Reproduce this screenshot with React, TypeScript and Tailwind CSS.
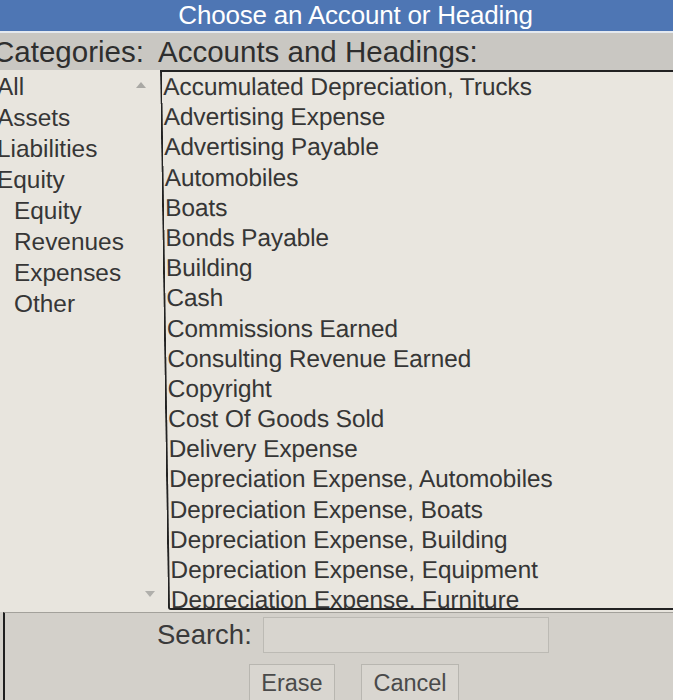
import React from "react"

const categories = [
  { label: "All", sub: false },
  { label: "Assets", sub: false },
  { label: "Liabilities", sub: false },
  { label: "Equity", sub: false },
  { label: "Equity", sub: true },
  { label: "Revenues", sub: true },
  { label: "Expenses", sub: true },
  { label: "Other", sub: true },
]

const accounts = [
  "Accumulated Depreciation, Trucks",
  "Advertising Expense",
  "Advertising Payable",
  "Automobiles",
  "Boats",
  "Bonds Payable",
  "Building",
  "Cash",
  "Commissions Earned",
  "Consulting Revenue Earned",
  "Copyright",
  "Cost Of Goods Sold",
  "Delivery Expense",
  "Depreciation Expense, Automobiles",
  "Depreciation Expense, Boats",
  "Depreciation Expense, Building",
  "Depreciation Expense, Equipment",
  "Depreciation Expense, Furniture",
]

export default function App() {
  return (
    <div className="w-[673px] h-[700px] overflow-hidden bg-[#d3d0ca] text-[#363636] font-['Liberation_Sans']">
      {/* title bar */}
      <div className="h-[31px] bg-[#4e76b4] text-white text-[26px] leading-[30px] text-center pl-[38px] tracking-[-0.2px] whitespace-nowrap">
        Choose an Account or Heading
      </div>
      <div className="h-[2px] bg-[#e4e9ef]" />

      {/* column headings */}
      <div className="h-[37px] bg-[#c9c7c2] flex items-end pb-[1px] text-[29.5px] leading-[34px] text-[#2e2e2e] whitespace-nowrap">
        <div className="w-[165px] ml-[-7px] shrink-0">Categories:</div>
        <div>Accounts and Headings:</div>
      </div>

      {/* lists */}
      <div className="flex h-[542px] bg-[#e8e5de]">
        <div className="relative w-[160px] shrink-0 pt-[1px] text-[24.4px]">
          {categories.map((c, i) => (
            <div
              key={i}
              className={`h-[31px] leading-[31px] ${c.sub ? "pl-[14px]" : "ml-[-3px]"}`}
            >
              {c.label}
            </div>
          ))}
          <div className="absolute left-[136px] top-[12px] w-0 h-0 border-l-[5px] border-r-[5px] border-b-[6px] border-l-transparent border-r-transparent border-b-[#a9a8a4]" />
          <div className="absolute left-[145px] top-[521px] w-0 h-0 border-l-[5px] border-r-[5px] border-t-[6px] border-l-transparent border-r-transparent border-t-[#b0afab]" />
        </div>
        <div className="flex-1 h-[540px] overflow-hidden border-t-2 border-l-2 border-b-2 border-[#222] rounded-bl-[3px] bg-[#e9e6df] pl-[1px] skew-x-[0.85deg] origin-top text-[24.5px] tracking-[-0.1px]">
          {accounts.map((a) => (
            <div key={a} className="h-[30.2px] leading-[30px] whitespace-nowrap">
              {a}
            </div>
          ))}
        </div>
      </div>

      {/* search + buttons */}
      <div className="h-[88px] border-t border-[#a3a19b] border-l-2 border-l-[#1e1e1e] ml-[3px] bg-[#d3d0ca]">
        <div className="flex items-center h-[42px] pl-[152px] pt-[2px]">
          <span className="text-[27.5px] text-[#3a3a3a] w-[106px]">Search:</span>
          <div className="w-[286px] h-[36px] border border-[#bcbab4] bg-[#d8d5cf]" />
        </div>
        <div className="flex pl-[244px] pt-[9px] gap-[26px] text-[23.5px] text-[#4a4a4a]">
          <div className="w-[86px] h-[40px] border border-[#b8b6b0] bg-[#d9d6d0] flex items-center justify-center">
            Erase
          </div>
          <div className="w-[98px] h-[40px] border border-[#b8b6b0] bg-[#d9d6d0] flex items-center justify-center">
            Cancel
          </div>
        </div>
      </div>
    </div>
  )
}
